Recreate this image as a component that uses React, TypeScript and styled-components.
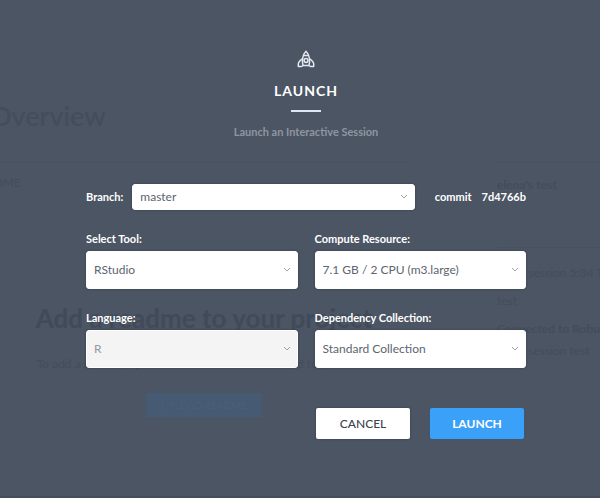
import React from "react";
import styled, { createGlobalStyle } from "styled-components";

const GlobalStyle = createGlobalStyle`
  *, *::before, *::after { box-sizing: border-box; }
  body {
    margin: 0;
    background: #4b5563;
    font-family: "Lato", "Liberation Sans", sans-serif;
  }
  h1, h2, h3, p { margin: 0; }
`;

const Stack = styled.div`
  display: grid;
  grid-template-columns: minmax(0, 1fr);
  min-height: 100vh;
  overflow: hidden;
  border-bottom: 2px solid #454d5b;

  > * { grid-area: 1 / 1; }
`;

/* Page dimmed behind the dialog */
const Backdrop = styled.div`
  color: #444d5b;
  font-size: 12px;
  line-height: 16px;
  white-space: nowrap;
  user-select: none;
`;

const PageTitle = styled.h2`
  margin-top: 98px;
  margin-left: -10px;
  font-size: 27px;
  line-height: 36px;
  font-weight: 500;
`;

const Columns = styled.div`
  display: grid;
  grid-template-columns: minmax(0, 1fr) 103px;
  column-gap: 89px;
  margin-top: 28px;
`;

const Readme = styled.section`
  display: flex;
  flex-direction: column;
  align-items: center;
  border-top: 1px solid #485160;
`;

const TabName = styled.p`
  align-self: flex-start;
  margin: 12px 0 111px -29px;
`;

const EmptyTitle = styled.h3`
  color: #414a58;
  font-size: 26px;
  line-height: 32px;
  font-weight: 700;
`;

const EmptyText = styled.p`
  margin-top: 22px;
`;

const GhostAction = styled.span`
  margin-top: 21px;
  padding: 4px 16px;
  background: #465a74;
  color: #4b5f75;
  font-size: 10px;
`;

const Activity = styled.aside`
  display: flex;
  flex-direction: column;
  border-top: 1px solid #485160;
`;

const ActivityTitle = styled.h3`
  padding: 14px 0 54px;
  border-bottom: 1px solid #465060;
  margin-bottom: 17px;
  font-size: 12px;
  line-height: 16px;
`;

const ActivityItem = styled.p<{ $strong?: boolean }>`
  margin-bottom: ${(p) => (p.$strong ? "6px" : "12px")};
  font-weight: ${(p) => (p.$strong ? 700 : 400)};
`;

/* Dialog */
const Dialog = styled.form`
  display: flex;
  flex-direction: column;
  padding: 50px 74px 56px 86px;
  color: #fff;
`;

const Header = styled.header`
  display: flex;
  flex-direction: column;
  align-items: center;
`;

const Title = styled.h1`
  margin-top: 13px;
  font-size: 14px;
  line-height: 20px;
  font-weight: 700;
  letter-spacing: 1px;
`;

const Rule = styled.div`
  width: 30px;
  height: 2px;
  margin-top: 9px;
  background: #dfe5f5;
`;

const Subtitle = styled.p`
  margin-top: 12px;
  color: #8f96a2;
  font-size: 11px;
  line-height: 16px;
  font-weight: 700;
`;

const BranchRow = styled.div`
  display: flex;
  align-items: center;
  gap: 9px;
  margin-top: 44px;
`;

const Label = styled.label`
  color: #fff;
  font-size: 11px;
  line-height: 16px;
  font-weight: 700;
`;

const Commit = styled.p`
  display: flex;
  gap: 10px;
  margin-left: 11px;
  font-size: 11px;
  line-height: 16px;
  font-weight: 700;
`;

const Fields = styled.div`
  display: grid;
  grid-template-columns: repeat(2, minmax(0, 1fr));
  gap: 21px 17px;
  margin-top: 21px;
`;

const Field = styled.div`
  display: flex;
  flex-direction: column;
  gap: 4px;
`;

const SelectBox = styled.div`
  display: grid;
  flex: 1;
  align-items: center;

  > * { grid-area: 1 / 1; }
`;

const Select = styled.select<{ $compact?: boolean }>`
  appearance: none;
  width: 100%;
  height: ${(p) => (p.$compact ? "26px" : "38px")};
  padding: 0 24px 2px 7px;
  border: 1px solid #fff;
  border-radius: 3px;
  background: #fff;
  box-shadow: 0 0 2px #2f3a48;
  color: #5c6470;
  font-family: inherit;
  font-size: 12px;

  &:disabled {
    opacity: 1;
    border-color: #fff;
    background: #f4f4f5;
    color: #9599a4;
  }
`;

const Chevron = styled.svg`
  justify-self: end;
  margin-right: 7px;
  pointer-events: none;
`;

const Actions = styled.div`
  display: flex;
  justify-content: flex-end;
  gap: 20px;
  margin: 40px 2px 0 0;
`;

const Button = styled.button<{ $primary?: boolean }>`
  width: 94px;
  height: 31px;
  border: 0;
  border-radius: 2px;
  background: ${(p) => (p.$primary ? "#3ba0f8" : "#fff")};
  box-shadow: 0 0 2px ${(p) => (p.$primary ? "#38618f" : "#2f3a48")};
  color: ${(p) => (p.$primary ? "#fff" : "#3c4450")};
  font-family: inherit;
  font-size: 12px;
  font-weight: ${(p) => (p.$primary ? 700 : 500)};
  cursor: pointer;
`;

function Rocket() {
  return (
    <svg width="18" height="18" viewBox="0 0 18 18" fill="none" stroke="#e4e8f1" strokeWidth="1.5" strokeLinejoin="round" strokeLinecap="round" aria-hidden="true">
      <path d="M6 15.500C5 12 5 5 9 1.300c4 3.700 4 10.700 3 14.200z" />
      <path d="M6.600 5.500h4.800" />
      <path d="M5.300 8.800C2.800 10.500 1.300 12 1.300 14v2.500H4.500L6 15.500M12.700 8.800c2.500 1.700 4 3.200 4 5.200v2.500h-3.200L12 15.500" />
      <circle cx="9" cy="10.500" r="1.900" />
    </svg>
  );
}

type PickerProps = { id: string; value: string; compact?: boolean; disabled?: boolean };

function Picker({ id, value, compact, disabled }: PickerProps) {
  return (
    <SelectBox>
      <Select id={id} $compact={compact} disabled={disabled} defaultValue={value}>
        <option>{value}</option>
      </Select>
      <Chevron width="8" height="6" viewBox="0 0 8 6" fill="none" stroke="#9da2ac" aria-hidden="true">
        <path d="M1 1l3 3 3-3" />
      </Chevron>
    </SelectBox>
  );
}

const fields = [
  { id: "tool", label: "Select Tool:", value: "RStudio" },
  { id: "resource", label: "Compute Resource:", value: "7.1 GB / 2 CPU (m3.large)" },
  { id: "language", label: "Language:", value: "R", disabled: true },
  { id: "dependencies", label: "Dependency Collection:", value: "Standard Collection" },
];

export default function App() {
  return (
    <>
      <GlobalStyle />
      <Stack>
        <Backdrop aria-hidden="true">
          <PageTitle>Overview</PageTitle>
          <Columns>
            <Readme>
              <TabName>README</TabName>
              <EmptyTitle>Add a readme to your project</EmptyTitle>
              <EmptyText>To add a readme, upload a file named README.md to your files.</EmptyText>
              <GhostAction>UPLOAD README</GhostAction>
            </Readme>
            <Activity>
              <ActivityTitle>elena's test</ActivityTitle>
              <ActivityItem>elena session 5:34 Test</ActivityItem>
              <ActivityItem>test</ActivityItem>
              <ActivityItem $strong>Connected to Robust</ActivityItem>
              <ActivityItem>elena session test</ActivityItem>
            </Activity>
          </Columns>
        </Backdrop>

        <Dialog onSubmit={(e) => e.preventDefault()}>
          <Header>
            <Rocket />
            <Title>LAUNCH</Title>
            <Rule />
            <Subtitle>Launch an Interactive Session</Subtitle>
          </Header>
          <BranchRow>
            <Label htmlFor="branch">Branch:</Label>
            <Picker id="branch" value="master" compact />
            <Commit>
              <span>commit</span>
              <span>7d4766b</span>
            </Commit>
          </BranchRow>
          <Fields>
            {fields.map((f) => (
              <Field key={f.id}>
                <Label htmlFor={f.id}>{f.label}</Label>
                <Picker id={f.id} value={f.value} disabled={f.disabled} />
              </Field>
            ))}
          </Fields>
          <Actions>
            <Button type="button">CANCEL</Button>
            <Button type="submit" $primary>LAUNCH</Button>
          </Actions>
        </Dialog>
      </Stack>
    </>
  );
}
